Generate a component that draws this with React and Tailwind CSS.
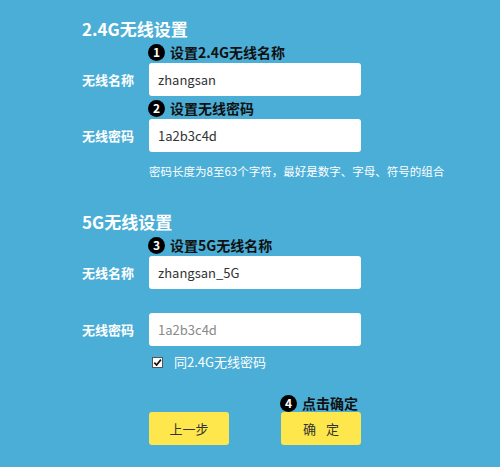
import React from 'react';

const font = { fontFamily: '"Microsoft YaHei", "Noto Sans CJK SC", "Noto Sans", sans-serif' };

const Step = ({ n, text, className = '' }) => (
  <div className={`flex h-[16px] items-center ${className}`}>
    <span className="flex h-[17px] w-[17px] items-center justify-center rounded-full bg-black text-[12px] font-bold leading-none text-white">
      {n}
    </span>
    <span className="ml-[5px] text-[14px] font-bold leading-none text-[#111]">{text}</span>
  </div>
);

const Row = ({ label, value, muted, className = '' }) => (
  <div className={`flex items-center ${className}`}>
    <div className="w-[67px] text-[13px] font-bold text-white">{label}</div>
    <div
      className={`flex h-[33px] w-[212px] items-center rounded-[3px] bg-white pl-[9px] text-[13px] ${
        muted ? 'text-[#8a8a8a]' : 'text-[#333]'
      }`}
    >
      {value}
    </div>
  </div>
);

export default function App() {
  return (
    <div style={font} className="h-[467px] w-[500px] overflow-hidden bg-[#4aaed7] pl-[82px] pt-[17px]">
      <div className="h-[24px] text-[17px] font-bold leading-[24px] text-white">2.4G无线设置</div>
      <Step n="1" text="设置2.4G无线名称" className="mt-[3px] pl-[66px]" />
      <Row label="无线名称" value="zhangsan" className="mt-[3px]" />
      <Step n="2" text="设置无线密码" className="mt-[4px] pl-[66px]" />
      <Row label="无线密码" value="1a2b3c4d" className="mt-[3px]" />
      <div className="mt-[11px] h-[16px] pl-[67px] text-[11.5px] leading-[16px] text-white">
        密码长度为8至63个字符，最好是数字、字母、符号的组合
      </div>

      <div className="mt-[31px] h-[24px] text-[17px] font-bold leading-[24px] text-white">5G无线设置</div>
      <Step n="3" text="设置5G无线名称" className="mt-[3px] pl-[66px]" />
      <Row label="无线名称" value="zhangsan_5G" className="mt-[3px]" />
      <Row label="无线密码" value="1a2b3c4d" muted className="mt-[24px]" />
      <div className="mt-[8px] flex h-[16px] items-center pl-[70px]">
        <span className="flex h-[11px] w-[11px] items-center justify-center border border-[#555] bg-white">
          <svg viewBox="0 0 10 10" className="h-[9px] w-[9px]">
            <path d="M1.5 5.2 L4 7.8 L8.8 1.8" fill="none" stroke="#111" strokeWidth="1.8" />
          </svg>
        </span>
        <span className="ml-[11px] text-[13px] text-white">同2.4G无线密码</span>
      </div>

      <Step n="4" text="点击确定" className="mt-[25px] pl-[198px]" />
      <div className="mt-[1px] flex pl-[67px]">
        <button className="h-[33px] w-[80px] rounded-[3px] bg-[#fde74c] text-[13px] text-[#333]">上一步</button>
        <button className="ml-[52px] flex h-[33px] w-[80px] items-center justify-center rounded-[3px] bg-[#fde74c] text-[13px] text-[#333]">
          <span>确</span>
          <span className="ml-[10px]">定</span>
        </button>
      </div>
    </div>
  );
}
